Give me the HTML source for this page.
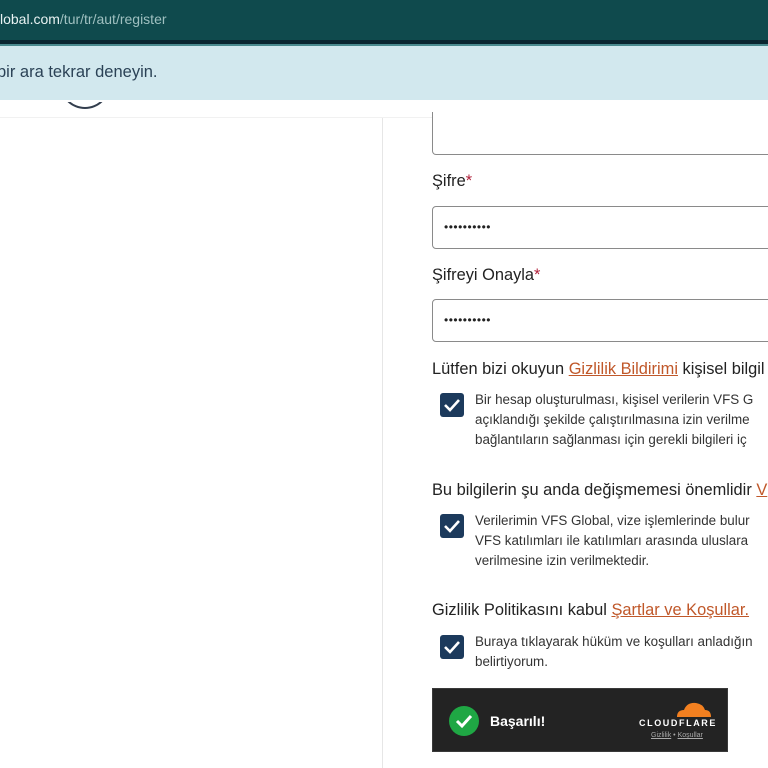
<!DOCTYPE html>
<html><head><meta charset="utf-8"><style>
*{margin:0;padding:0;box-sizing:border-box}
body{width:768px;height:768px;overflow:hidden;background:#fff;font-family:"Liberation Sans",Arial,sans-serif;position:relative}
.top{position:absolute;left:0;top:0;width:768px;height:40px;background:#0f4a4d}
.top span{position:absolute;left:0;top:11px;font-size:14px;color:#9fc0c0}
.top b{color:#e8f2f2;font-weight:normal}
.l1{position:absolute;top:40px;left:0;width:768px;height:4px;background:#0a2630}
.l2{position:absolute;top:44px;left:0;width:768px;height:2px;background:#4a8a8e}
.ban{position:absolute;top:46px;left:0;width:768px;height:54px;background:#d2e8ee;color:#2b4256;font-size:16.5px}
.ban span{position:absolute;left:-3px;top:17px}
.hdr{position:absolute;top:100px;left:0;width:768px;height:18px;background:#fff;border-bottom:1px solid #f1f1f1}
.circ{position:absolute;left:60px;top:60px;width:50px;height:49px;border-radius:50%;border:2px solid #333e4e}
.vl{position:absolute;left:382px;top:118px;width:1px;height:650px;background:#e6e6e6}
.inp{position:absolute;left:432px;width:360px;height:43px;border:1px solid #8a8a8a;border-radius:4px;background:#fff}
.inp span{position:absolute;left:11px;top:13px;font-size:12px;letter-spacing:0.5px;color:#222}
.lab{position:absolute;left:432px;font-size:16.4px;color:#222}
.lab i{color:#b0203a;font-style:normal}
.a{color:#c0582a;text-decoration:underline}
.cb{position:absolute;left:440px;width:24px;height:24px;border-radius:3px;background:#1c3a5c}
.cb svg{position:absolute;left:3px;top:4px}
.txt{position:absolute;left:475px;font-size:13.4px;line-height:20px;color:#333;white-space:nowrap}
.cf{position:absolute;left:432px;top:688px;width:296px;height:64px;background:#232323;border:1px solid #3a3a3a}
</style></head><body>
<div class="top"><span><b>lobal.com</b>/tur/tr/aut/register</span></div>
<div class="l1"></div><div class="l2"></div>
<div class="circ"></div>
<div class="ban"><span>bir ara tekrar deneyin.</span></div>
<div class="hdr"></div>
<div class="circ" style="clip-path:inset(42px 0 0 0)"></div>
<div class="vl"></div>
<div class="inp" style="top:112px;border-top:none;border-radius:0 0 4px 4px"></div>
<div class="lab" style="top:172px">Şifre<i>*</i></div>
<div class="inp" style="top:206px"><span>••••••••••</span></div>
<div class="lab" style="top:266px">Şifreyi Onayla<i>*</i></div>
<div class="inp" style="top:299px"><span>••••••••••</span></div>
<div class="lab" style="top:360px;white-space:nowrap">Lütfen bizi okuyun <span class="a">Gizlilik Bildirimi</span> kişisel bilgil</div>
<div class="cb" style="top:393px"><svg width="18" height="16" viewBox="0 0 18 16"><path d="M2 8l5 5L16 3" stroke="#fff" stroke-width="2.6" fill="none"/></svg></div>
<div class="txt" style="top:390px">Bir hesap oluşturulması, kişisel verilerin VFS G<br>açıklandığı şekilde çalıştırılmasına izin verilme<br>bağlantıların sağlanması için gerekli bilgileri iç</div>
<div class="lab" style="top:481px;white-space:nowrap">Bu bilgilerin şu anda değişmemesi önemlidir <span class="a">V</span></div>
<div class="cb" style="top:514px"><svg width="18" height="16" viewBox="0 0 18 16"><path d="M2 8l5 5L16 3" stroke="#fff" stroke-width="2.6" fill="none"/></svg></div>
<div class="txt" style="top:511px">Verilerimin VFS Global, vize işlemlerinde bulur<br>VFS katılımları ile katılımları arasında uluslara<br>verilmesine izin verilmektedir.</div>
<div class="lab" style="top:601px;white-space:nowrap">Gizlilik Politikasını kabul <span class="a">Şartlar ve Koşullar.</span></div>
<div class="cb" style="top:635px"><svg width="18" height="16" viewBox="0 0 18 16"><path d="M2 8l5 5L16 3" stroke="#fff" stroke-width="2.6" fill="none"/></svg></div>
<div class="txt" style="top:632px">Buraya tıklayarak hüküm ve koşulları anladığın<br>belirtiyorum.</div>
<div class="cf">
<div style="position:absolute;left:16px;top:17px;width:30px;height:30px;border-radius:50%;background:#1fa744"><svg width="30" height="30" viewBox="0 0 30 30"><path d="M8 15l5 5 9-10" stroke="#fff" stroke-width="3" fill="none"/></svg></div>
<div style="position:absolute;left:57px;top:24px;color:#fff;font-size:14px;font-weight:bold">Başarılı!</div>
<svg style="position:absolute;left:240px;top:10px" width="40" height="20" viewBox="0 0 40 20"><path d="M4 18 Q4 11 11 11 Q14 3 23 4 Q30 5 32 11 Q38 11 38 18Z" fill="#f38020"/></svg>
<div style="position:absolute;left:206px;top:29px;color:#fff;font-size:9px;font-weight:bold;letter-spacing:1.6px">CLOUDFLARE</div>
<div style="position:absolute;left:218px;top:43px;color:#aaa;font-size:7px"><u>Gizlilik</u> • <u>Koşullar</u></div>
</div>
</body></html>
